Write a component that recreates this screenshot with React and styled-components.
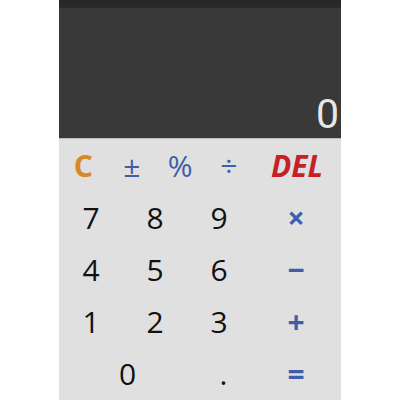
import React from "react";
import styled, { createGlobalStyle } from "styled-components";

const GlobalStyle = createGlobalStyle`
    html, body {
        margin: 0;
        padding: 0;
        background: #fff;
    }
    body {
        font-family: "Open Sans", "Noto Sans", sans-serif;
    }
`
const Phone = styled.div`
    width: 282px;
    height: 400px;
    margin: 0 auto;
    display: flex;
    flex-direction: column;
    overflow: hidden;
`
const Display = styled.div`
    height: 139px;
    flex-shrink: 0;
    background: linear-gradient(#262626 0, #2a2a2a 8px, #393939 8px, #393939 100%);
    border-bottom: 1px solid #bdbdbd;
    display: flex;
    align-items: flex-end;
    justify-content: flex-end;
    padding-right: 2px;
    box-sizing: border-box;
`
const Result = styled.div`
    font-family: "Roboto", "Open Sans", sans-serif;
    font-weight: 400;
    font-size: 41px;
    line-height: 41px;
    color: #e6e6e6;
    margin-bottom: 3px;
`
const Keypad = styled.div`
    flex: 1;
    background: #e0e0e0;
    display: flex;
    flex-direction: column;
`
const Row = styled.div`
    display: grid;
    grid-template-columns: ${props => props.cols};
    height: 52px;
`
const Key = styled.div`
    display: flex;
    align-items: center;
    justify-content: center;
    font-size: ${props => props.size || 30}px;
    font-weight: ${props => props.bold ? 700 : 400};
    font-style: ${props => props.italic ? "italic" : "normal"};
    color: ${props => props.color || "#111"};
    cursor: pointer;
    user-select: none;
`

const BLUE = "#3f5dab";
const numCols = "64px 64px 64px 90px";

export default function App() {
    return (
        <>
            <GlobalStyle />
            <Phone>
                <Display>
                    <Result>0</Result>
                </Display>
                <Keypad>
                    <Row cols="48.5px 48.5px 48.5px 48.5px 88px">
                        <Key bold color="#d48b26">C</Key>
                        <Key color={BLUE}>±</Key>
                        <Key color={BLUE}>%</Key>
                        <Key color={BLUE}>÷</Key>
                        <Key bold italic color="#c62127">DEL</Key>
                    </Row>
                    <Row cols={numCols}>
                        <Key>7</Key>
                        <Key>8</Key>
                        <Key>9</Key>
                        <Key color={BLUE} bold>×</Key>
                    </Row>
                    <Row cols={numCols}>
                        <Key>4</Key>
                        <Key>5</Key>
                        <Key>6</Key>
                        <Key color={BLUE} bold>−</Key>
                    </Row>
                    <Row cols={numCols}>
                        <Key>1</Key>
                        <Key>2</Key>
                        <Key>3</Key>
                        <Key color={BLUE} bold>+</Key>
                    </Row>
                    <Row cols="137px 55px 90px">
                        <Key>0</Key>
                        <Key>.</Key>
                        <Key color={BLUE} bold>=</Key>
                    </Row>
                </Keypad>
            </Phone>
        </>
    )
}
